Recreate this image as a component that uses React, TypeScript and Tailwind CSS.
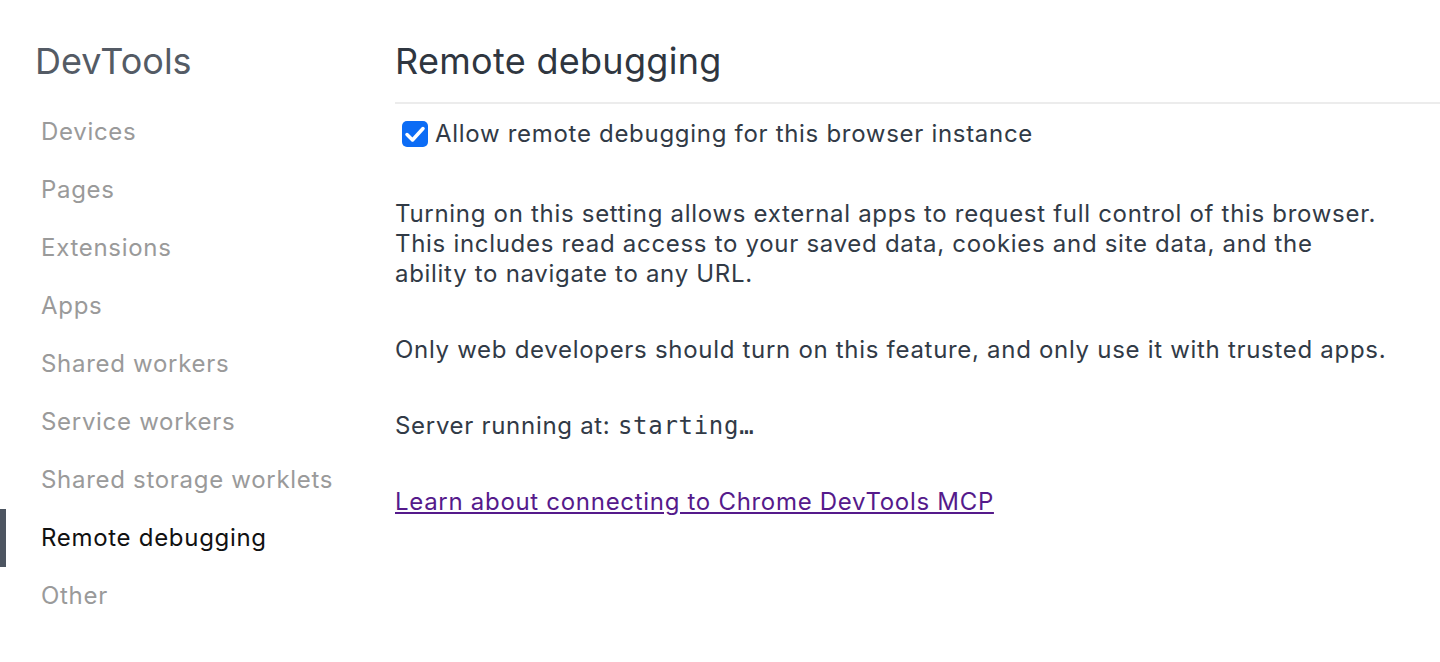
import { useState } from "react";

const navItems = [
  "Devices",
  "Pages",
  "Extensions",
  "Apps",
  "Shared workers",
  "Service workers",
  "Shared storage worklets",
  "Remote debugging",
  "Other",
];

export default function App() {
  const [active, setActive] = useState("Remote debugging");
  const [allow, setAllow] = useState(true);

  return (
    <div className="flex min-h-[662px] w-[1440px] bg-white font-['Inter','Liberation_Sans',sans-serif] tracking-[0.7px] text-[#313a46]">
      <aside className="w-[395px] shrink-0">
        <div className="h-[103px] pl-[35px] pt-[38px]">
          <h1 className="text-[36px] leading-[46px] tracking-normal text-[#545b65]">DevTools</h1>
        </div>
        <nav className="flex flex-col">
          {navItems.map((name) => {
            const on = name === active;
            return (
              <button
                key={name}
                onClick={() => setActive(name)}
                className={`flex h-[58px] items-center border-l-[6px] pl-[35px] text-left text-[24px] ${
                  on ? "border-[#4d5561] text-[#111]" : "border-transparent text-[#9a9a9a]"
                }`}
              >
                {name}
              </button>
            );
          })}
        </nav>
      </aside>

      <main className="flex-1">
        <div className="border-b-2 border-[#ececec] pb-[18px] pt-[38px]">
          <h2 className="text-[36px] leading-[46px] tracking-[0.3px] text-[#2f3640]">Remote debugging</h2>
        </div>

        <label className="mt-[15px] flex h-[30px] items-center gap-[7px] pl-[7px] text-[24px]">
          <span
            onClick={() => setAllow(!allow)}
            className={`flex h-[26px] w-[26px] items-center justify-center rounded-[5px] ${
              allow ? "bg-[#0c6cf5]" : "border-2 border-[#888] bg-white"
            }`}
          >
            {allow ? (
              <svg width="26" height="26" viewBox="0 0 26 26" fill="none">
                <path d="M5 13.5 L10.5 19 L21 7.5" stroke="white" strokeWidth="3.5" strokeLinecap="round" strokeLinejoin="round" />
              </svg>
            ) : null}
          </span>
          Allow remote debugging for this browser instance
        </label>

        <p className="mt-[50px] text-[24px] leading-[30px]">
          Turning on this setting allows external apps to request full control of this browser.
          <br />
          This includes read access to your saved data, cookies and site data, and the
          <br />
          ability to navigate to any URL.
        </p>

        <p className="mt-[46px] text-[24px] leading-[30px]">
          Only web developers should turn on this feature, and only use it with trusted apps.
        </p>

        <p className="mt-[46px] text-[24px] leading-[30px]">
          Server running at: <span className="font-['DejaVu_Sans_Mono',monospace] text-[24px]">starting…</span>
        </p>

        <p className="mt-[46px] text-[24px] leading-[30px]">
          <a href="#" className="text-[#551a8b] underline">
            Learn about connecting to Chrome DevTools MCP
          </a>
        </p>
      </main>
    </div>
  );
}
